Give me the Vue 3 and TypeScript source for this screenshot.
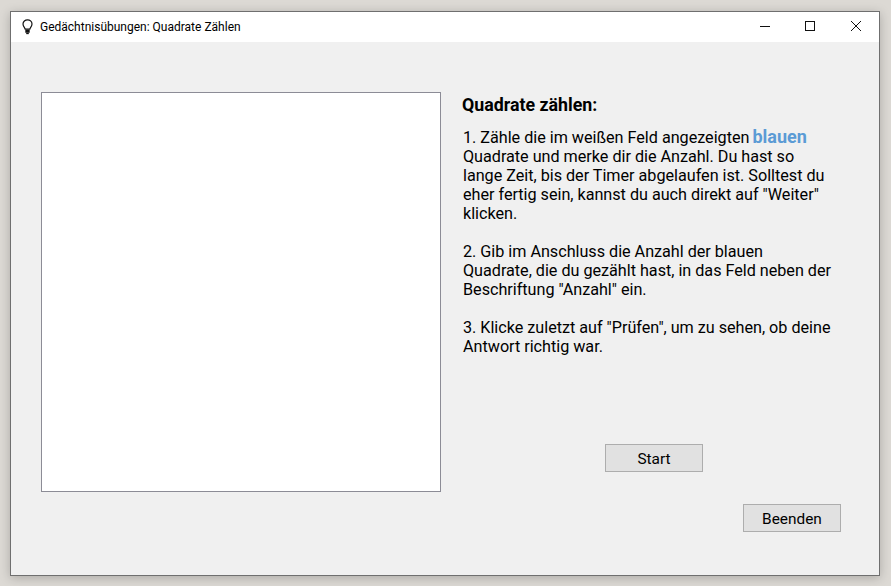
<script setup lang="ts">
const title = "Gedächtnisübungen: Quadrate Zählen";
</script>

<template>
  <div class="desktop">
    <div class="window">
      <header class="titlebar">
        <svg class="bulb" width="16" height="16" viewBox="0 0 16 16" fill="none" stroke="#111" stroke-width="1.2">
          <path d="M5.2 10.2C5 8.6 3 7.6 3 4.9 3 2.5 5.2.8 7.500.8S12 2.500 12 4.900C12 7.600 10 8.600 9.800 10.200Z" />
          <path d="M5.300 11.500h4.400M5.300 13h4.400" stroke-width="1.300" />
          <path d="M6.200 14.500h2.600" stroke-width="1.300" />
        </svg>
        <span class="title">{{ title }}</span>
        <div class="controls">
          <svg width="46" height="30" viewBox="0 0 46 30"><path d="M19 14.500h10" stroke="#111" fill="none" /></svg>
          <svg width="46" height="30" viewBox="0 0 46 30"><rect x="18.500" y="9.500" width="9" height="9" stroke="#111" fill="none" /></svg>
          <svg width="46" height="30" viewBox="0 0 46 30"><path d="M18 9l10 10M28 9L18 19" stroke="#111" fill="none" /></svg>
        </div>
      </header>
      <main class="content">
        <div class="field"></div>
        <section class="side">
          <h1>Quadrate zählen:</h1>
          <p>1. Zähle die im weißen Feld angezeigten <b class="blue">blauen</b><br />Quadrate und merke dir die Anzahl. Du hast so<br />lange Zeit, bis der Timer abgelaufen ist. Solltest du<br />eher fertig sein, kannst du auch direkt auf "Weiter"<br />klicken.</p>
          <p>2. Gib im Anschluss die Anzahl der blauen<br />Quadrate, die du gezählt hast, in das Feld neben der<br />Beschriftung "Anzahl" ein.</p>
          <p>3. Klicke zuletzt auf "Prüfen", um zu sehen, ob deine<br />Antwort richtig war.</p>
          <div class="start-row"><button type="button">Start</button></div>
        </section>
      </main>
      <footer class="foot"><button type="button">Beenden</button></footer>
    </div>
  </div>
</template>

<style>
html, body { margin: 0; padding: 0; }
</style>

<style scoped>
.desktop {
  width: 891px;
  height: 586px;
  box-sizing: border-box;
  padding: 11px 11px 10px 10px;
  background: #dcd9d4;
  overflow: hidden;
  font-family: Roboto, "Noto Sans", sans-serif;
  color: #000;
}
.window {
  height: 100%;
  box-sizing: border-box;
  border: 1px solid #6f6f6f;
  background: #f0f0f0;
  box-shadow: 0 2px 10px rgba(0, 0, 0, 0.22);
  display: flex;
  flex-direction: column;
}
.titlebar {
  height: 30px;
  flex: none;
  background: #fff;
  display: flex;
  align-items: center;
  padding-left: 9px;
}
.bulb { flex: none; }
.title { margin-left: 4px; font-size: 12px; line-height: 30px; }
.controls { margin-left: auto; display: flex; }
.controls svg { display: block; }
.content {
  flex: none;
  display: flex;
  padding: 50px 0 0 30px;
}
.field {
  width: 398px;
  height: 398px;
  flex: none;
  border: 1px solid #8c8c96;
  background: #fff;
}
.side {
  width: 390px;
  height: 400px;
  margin-left: 21px;
  display: flex;
  flex-direction: column;
}
h1 {
  margin: 3px 0 0;
  font-size: 17.800px;
  line-height: 20px;
  font-weight: 700;
}
p {
  margin: 13px 0 0 1px;
  font-size: 16.200px;
  line-height: 19px;
  letter-spacing: -0.020px;
}
p + p { margin-top: 19px; }
.blue { color: #5b9bd5; font-size: 18px; line-height: 1; margin-left: -1px; }
.start-row {
  margin-top: auto;
  margin-bottom: 20px;
  padding-left: 143px;
}
button {
  display: block;
  width: 98px;
  height: 28px;
  padding: 1px 0 0;
  box-sizing: border-box;
  border: 1px solid #adadad;
  border-radius: 0;
  background: #e1e1e1;
  font-family: inherit;
  font-size: 15.400px;
  color: #000;
}
.foot {
  display: flex;
  justify-content: flex-end;
  padding: 12px 38px 0 0;
}
</style>
